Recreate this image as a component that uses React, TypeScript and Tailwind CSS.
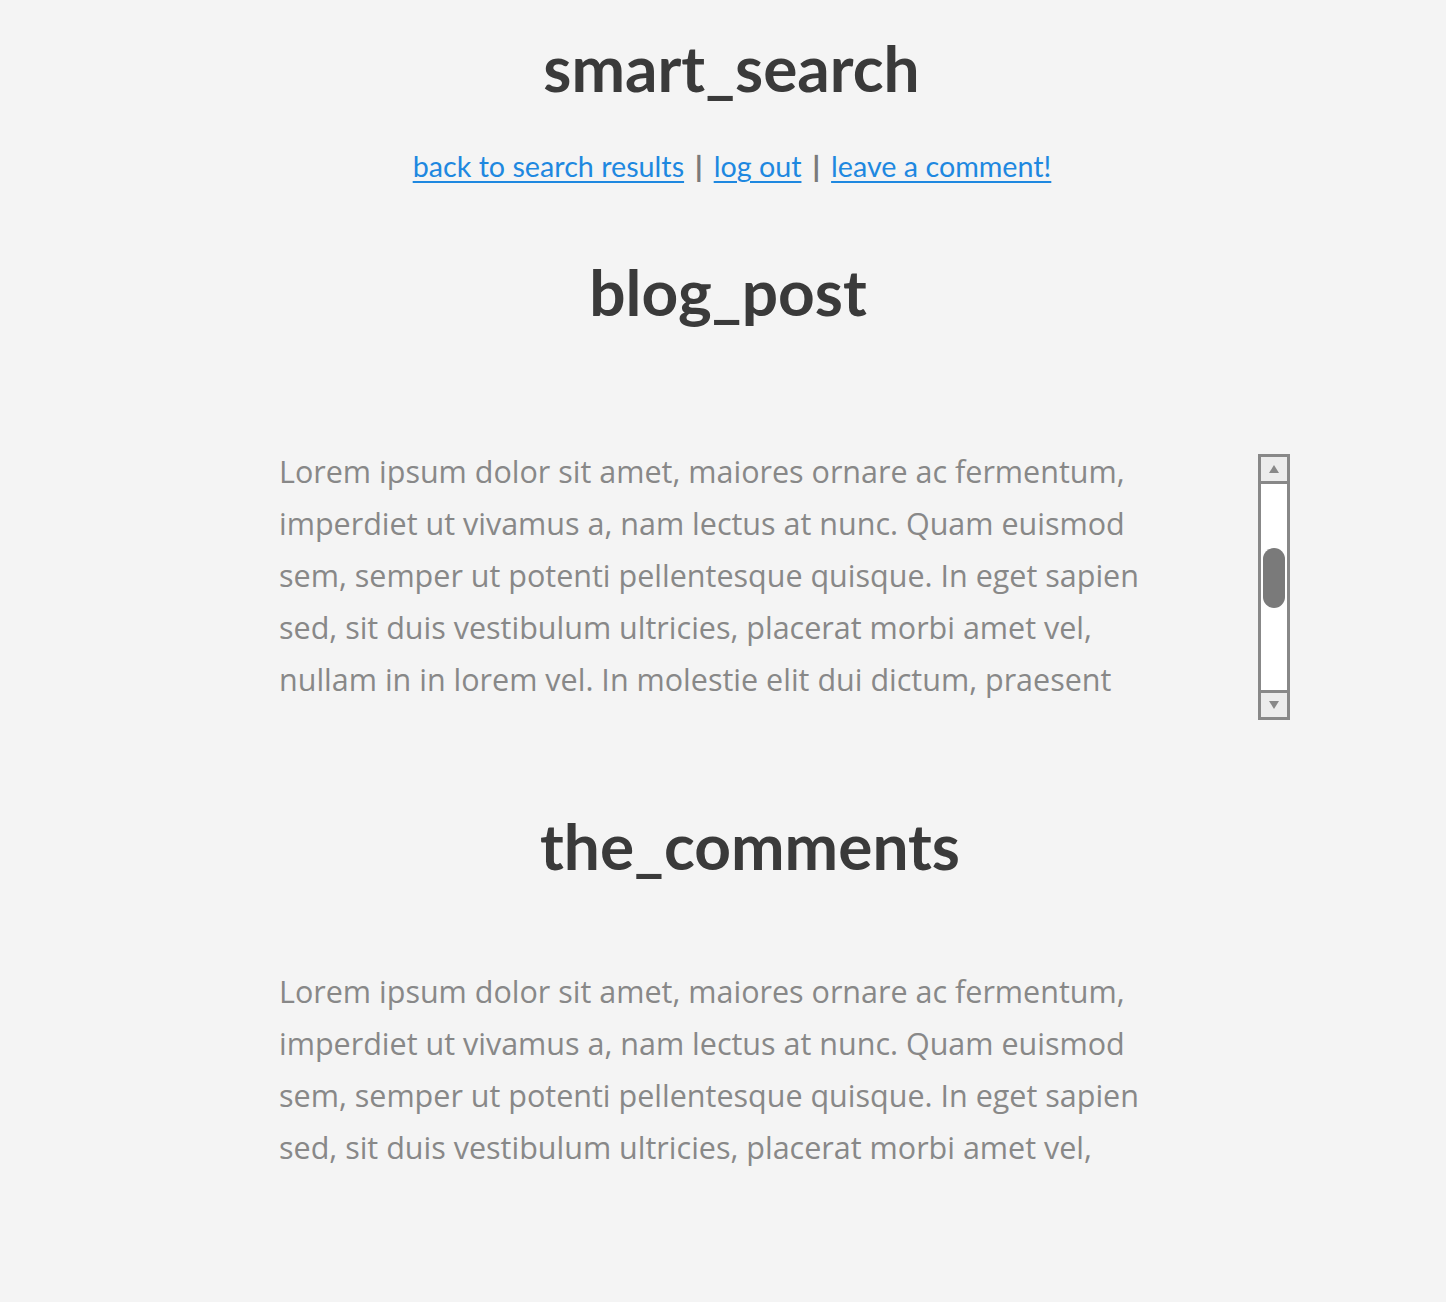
const postLines = [
  "Lorem ipsum dolor sit amet, maiores ornare ac fermentum,",
  "imperdiet ut vivamus a, nam lectus at nunc. Quam euismod",
  "sem, semper ut potenti pellentesque quisque. In eget sapien",
  "sed, sit duis vestibulum ultricies, placerat morbi amet vel,",
  "nullam in in lorem vel. In molestie elit dui dictum, praesent",
];

const commentLines = postLines.slice(0, 4);

const Scrollbar = () => (
  <div className="flex h-[266px] w-[32px] flex-col border-[3px] border-[#888] bg-white">
    <div className="flex h-[27px] items-center justify-center border-b-[3px] border-[#888] bg-[#ececec]">
      <svg width="12" height="10" viewBox="0 0 12 10">
        <path d="M6 1 L11 9 L1 9 Z" fill="#888" />
      </svg>
    </div>
    <div className="relative flex-1 bg-white">
      <div className="absolute left-[2px] right-[2px] top-[64px] h-[60px] rounded-full bg-[#7a7a7a]" />
    </div>
    <div className="flex h-[27px] items-center justify-center border-t-[3px] border-[#888] bg-[#ececec]">
      <svg width="12" height="10" viewBox="0 0 12 10">
        <path d="M1 1 L11 1 L6 9 Z" fill="#888" />
      </svg>
    </div>
  </div>
);

export default function App() {
  return (
    <div className="min-h-screen bg-[#f4f4f4] pt-[28px] font-['Lato','Open_Sans',sans-serif]">
      <h1 className="pl-[17px] text-center text-[64px] font-bold leading-[80px] text-[#3a3a3a]">smart_search</h1>

      <nav className="mt-[40px] flex items-center justify-center gap-[11px] pl-[18px] text-[28.7px] leading-[36px]">
        <a href="#" className="text-[#1e88e0] underline underline-offset-4">back to search results</a>
        <span className="font-black text-[#7a7a7a]">|</span>
        <a href="#" className="text-[#1e88e0] underline underline-offset-4">log out</a>
        <span className="font-black text-[#7a7a7a]">|</span>
        <a href="#" className="text-[#1e88e0] underline underline-offset-4">leave a comment!</a>
      </nav>

      <h2 className="mt-[68px] pl-[10px] text-center text-[64px] font-bold leading-[80px] text-[#3a3a3a]">blog_post</h2>

      {/* post body with its scroll track */}
      <div className="mt-[113px] flex items-start pl-[279px]">
        <div className="h-[265px] w-[900px] font-['Open_Sans',sans-serif] text-[30.5px] leading-[52px] text-[#888]">
          {postLines.map((line) => (
            <div key={line} className="whitespace-nowrap">{line}</div>
          ))}
        </div>
        <div className="ml-[79px] mt-[9px]">
          <Scrollbar />
        </div>
      </div>

      <h2 className="mt-[86px] pl-[54px] text-center text-[64px] font-bold leading-[80px] text-[#3a3a3a]">the_comments</h2>

      <div className="mt-[79px] pl-[279px] pb-[130px] font-['Open_Sans',sans-serif] text-[30.5px] leading-[52px] text-[#888]">
        {commentLines.map((line) => (
          <div key={line} className="whitespace-nowrap">{line}</div>
        ))}
      </div>
    </div>
  );
}
